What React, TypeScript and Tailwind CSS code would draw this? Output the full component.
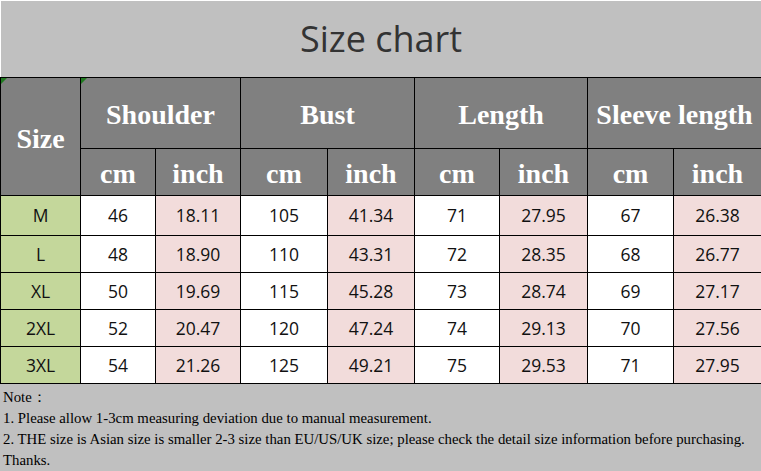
import React from "react";

const rows = [
    { size: "M", v: ["46", "18.11", "105", "41.34", "71", "27.95", "67", "26.38"] },
    { size: "L", v: ["48", "18.90", "110", "43.31", "72", "28.35", "68", "26.77"] },
    { size: "XL", v: ["50", "19.69", "115", "45.28", "73", "28.74", "69", "27.17"] },
    { size: "2XL", v: ["52", "20.47", "120", "47.24", "74", "29.13", "70", "27.56"] },
    { size: "3XL", v: ["54", "21.26", "125", "49.21", "75", "29.53", "71", "27.95"] },
];

const rowHeights = ["h-[40px]", "h-[37px]", "h-[37px]", "h-[37px]", "h-[37px]"];
const groups = ["Shoulder", "Bust", "Length", "Sleeve length"];
const colWidths = [80, 75, 85, 87, 87, 85, 88, 86, 88];

function Marker() {
    return (
        <svg className="absolute left-0 top-0" width="6" height="6" viewBox="0 0 6 6">
            <polygon points="0,0 6,0 0,6" fill="#1f7a1f" />
        </svg>
    );
}

export default function App() {
    const head = "border border-black bg-[#808080] text-white font-bold text-center text-[28px] pt-[4px]";
    return (
        <div className="w-[761px] h-[471px] bg-[#c0c0c0] flex flex-col overflow-hidden">
            <div className="h-[77px] shrink-0 border-t border-l border-white flex items-center justify-center">
                <h1 className="text-[36px] text-[#333333] font-normal" style={{ fontFamily: '"Open Sans", sans-serif' }}>
                    Size chart
                </h1>
            </div>
            <table className="w-[761px] table-fixed border-collapse shrink-0" style={{ fontFamily: '"Liberation Serif", serif' }}>
                <colgroup>
                    {colWidths.map((w, i) => (
                        <col key={i} style={{ width: w }} />
                    ))}
                </colgroup>
                <thead>
                    <tr className="h-[71px]">
                        <th rowSpan={2} className={`${head} relative`}>
                            <Marker />
                            Size
                        </th>
                        {groups.map((g, i) => (
                            <th key={g} colSpan={2} className={`${head} ${i === 0 ? "relative" : ""} whitespace-nowrap`}>
                                {i === 0 && <Marker />}
                                {g}
                            </th>
                        ))}
                    </tr>
                    <tr className="h-[46px]">
                        {groups.map((g) => (
                            <React.Fragment key={g}>
                                <th className={head}>cm</th>
                                <th className={head}>inch</th>
                            </React.Fragment>
                        ))}
                    </tr>
                </thead>
                <tbody className="text-[17.5px] text-[#111111]" style={{ fontFamily: '"Open Sans", sans-serif' }}>
                    {rows.map((r, ri) => (
                        <tr key={r.size} className={rowHeights[ri]}>
                            <td className="border border-black bg-[#c4d79b] text-center">{r.size}</td>
                            {r.v.map((v, i) => (
                                <td key={i} className={`border border-black text-center ${i % 2 === 1 ? "bg-[#f2dcdb]" : "bg-white"}`}>
                                    {v}
                                </td>
                            ))}
                        </tr>
                    ))}
                </tbody>
            </table>
            <div className="pt-[3px] pl-[3px] text-[14.8px] leading-[21px] text-black" style={{ fontFamily: '"Liberation Serif", serif' }}>
                <p>Note：</p>
                <p>1. Please allow 1-3cm measuring deviation due to manual measurement.</p>
                <p>2. THE size is Asian size is smaller 2-3 size than EU/US/UK size; please check the detail size information before purchasing.</p>
                <p>Thanks.</p>
            </div>
        </div>
    );
}
